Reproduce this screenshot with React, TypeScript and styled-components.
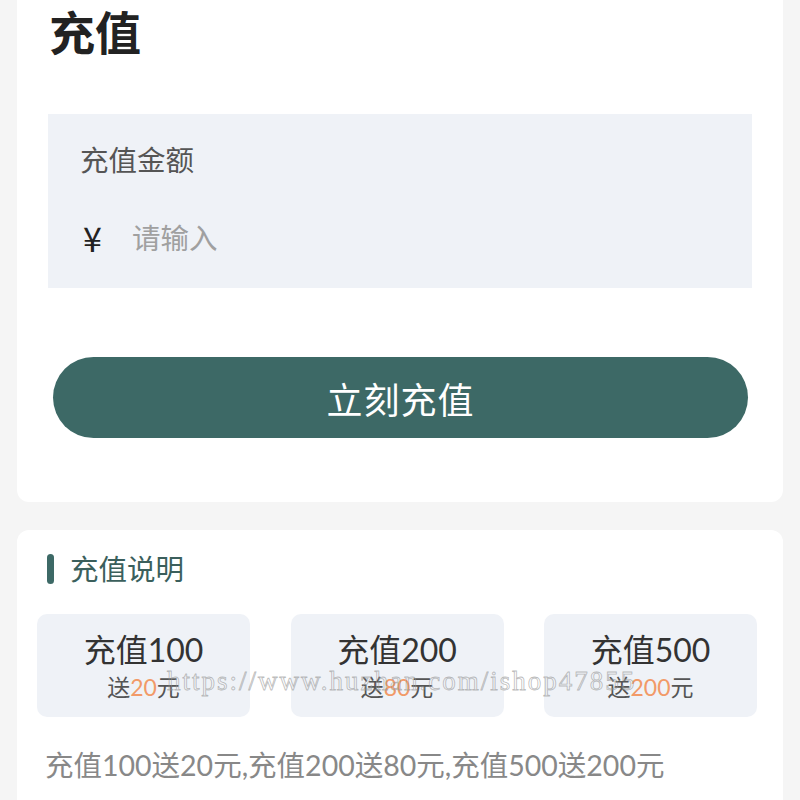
import * as React from "react";
import styled, { createGlobalStyle } from "styled-components";

const GlobalStyle = createGlobalStyle`
  html, body {
    margin: 0;
    padding: 0;
    background: #f5f5f5;
  }
  body {
    font-family: Lato, "Noto Sans CJK SC", "Noto Sans", sans-serif;
  }
`;

const Page = styled.div`
  position: relative;
  width: 800px;
  height: 800px;
  overflow: hidden;
  padding: 0 17px;
  box-sizing: border-box;
`;

const Card = styled.section<{ $top?: number }>`
  background: #fff;
  border-radius: 12px;
  margin-top: ${(p) => p.$top ?? 0}px;
`;

const TopCard = styled(Card)`
  padding: 25px 31px 64px 31px;
`;

const Title = styled.h1`
  margin: 0 0 0 1px;
  font-size: 46px;
  font-weight: 700;
  line-height: 56px;
  color: #222;
`;

const InputBox = styled.div`
  margin-top: 53px;
  background: #eff2f7;
  padding: 26px 32px 28px;
  height: 174px;
  box-sizing: border-box;
`;

const Label = styled.div`
  font-size: 28.5px;
  line-height: 40px;
  color: #555;
`;

const InputRow = styled.div`
  display: flex;
  align-items: center;
  margin-top: 38px;
  gap: 30px;
`;

const Currency = styled.span`
  font-family: "Noto Sans CJK SC", sans-serif;
  font-size: 34px;
  color: #222;
  padding-left: 3px;
  line-height: 40px;
`;

const AmountInput = styled.input`
  flex: 1;
  border: none;
  outline: none;
  background: transparent;
  font-family: inherit;
  font-size: 28.5px;
  color: #333;
  padding: 0;
  line-height: 40px;
  &::placeholder {
    color: #a0a0a0;
  }
`;

const SubmitButton = styled.button`
  display: block;
  width: 695px;
  height: 81px;
  margin: 69px 0 0 5px;
  border: none;
  border-radius: 41px;
  background: #3d6966;
  color: #fff;
  font-family: inherit;
  font-size: 36px;
  letter-spacing: 1px;
`;

const InfoCard = styled(Card)`
  padding: 22px 26px 30px 20px;
  height: 300px;
`;

const SectionHead = styled.div`
  display: flex;
  align-items: center;
  gap: 16px;
  padding-left: 10px;
`;

const Bar = styled.span`
  width: 7px;
  height: 30px;
  border-radius: 4px;
  background: #3d6966;
`;

const SectionTitle = styled.h2`
  margin: 0;
  font-size: 28.5px;
  font-weight: 400;
  line-height: 34px;
  color: #3b5f5c;
`;

const Options = styled.div`
  display: grid;
  grid-template-columns: repeat(3, 213px);
  justify-content: space-between;
  margin-top: 28px;
`;

const Option = styled.div`
  height: 103px;
  border-radius: 10px;
  background: #eff2f7;
  display: flex;
  flex-direction: column;
  align-items: center;
  justify-content: center;
`;

const OptionTitle = styled.div`
  font-size: 32px;
  line-height: 38px;
  color: #333;
`;

const OptionBonus = styled.div`
  margin-top: 4px;
  font-size: 23px;
  line-height: 28px;
  color: #555;
  & > em {
    font-style: normal;
    color: #f29a68;
  }
`;

const Note = styled.p`
  margin: 30px 0 0 8px;
  font-size: 28.5px;
  line-height: 36px;
  color: #888;
`;

const Watermark = styled.div`
  position: absolute;
  left: 167px;
  top: 666px;
  font-family: "Liberation Serif", "DejaVu Serif", serif;
  font-size: 27px;
  letter-spacing: 2px;
  color: transparent;
  -webkit-text-stroke: 0.8px rgba(150, 150, 150, 0.65);
  pointer-events: none;
  white-space: nowrap;
`;

const plans = [
  { amount: 100, bonus: 20 },
  { amount: 200, bonus: 80 },
  { amount: 500, bonus: 200 },
];

export default function App() {
  const [value, setValue] = React.useState("");

  return (
    <>
      <GlobalStyle />
      <Page>
        <TopCard $top={-20}>
          <Title>充值</Title>
          <InputBox>
            <Label>充值金额</Label>
            <InputRow>
              <Currency>¥</Currency>
              <AmountInput
                placeholder="请输入"
                value={value}
                onChange={(e) => setValue(e.target.value)}
              />
            </InputRow>
          </InputBox>
          <SubmitButton>立刻充值</SubmitButton>
        </TopCard>

        <InfoCard $top={28}>
          <SectionHead>
            <Bar />
            <SectionTitle>充值说明</SectionTitle>
          </SectionHead>
          <Options>
            {plans.map((p) => (
              <Option key={p.amount}>
                <OptionTitle>充值{p.amount}</OptionTitle>
                <OptionBonus>
                  送<em>{p.bonus}</em>元
                </OptionBonus>
              </Option>
            ))}
          </Options>
          <Note>
            {plans.map((p) => `充值${p.amount}送${p.bonus}元`).join(",")}
          </Note>
        </InfoCard>

        <Watermark>https://www.huzhan.com/ishop47855</Watermark>
      </Page>
    </>
  );
}
